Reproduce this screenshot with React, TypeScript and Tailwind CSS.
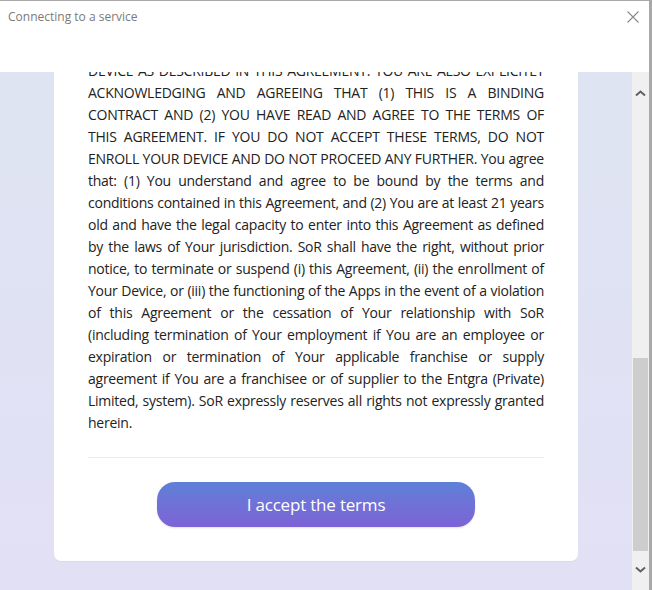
import React from 'react';

const termsLines: string[] = [
  'DEVICE AS DESCRIBED IN THIS AGREEMENT. YOU ARE ALSO EXPLICITLY',
  'ACKNOWLEDGING AND AGREEING THAT (1) THIS IS A BINDING',
  'CONTRACT AND (2) YOU HAVE READ AND AGREE TO THE TERMS OF',
  'THIS AGREEMENT. IF YOU DO NOT ACCEPT THESE TERMS, DO NOT',
  'ENROLL YOUR DEVICE AND DO NOT PROCEED ANY FURTHER. You agree',
  'that: (1) You understand and agree to be bound by the terms and',
  'conditions contained in this Agreement, and (2) You are at least 21 years',
  'old and have the legal capacity to enter into this Agreement as defined',
  'by the laws of Your jurisdiction. SoR shall have the right, without prior',
  'notice, to terminate or suspend (i) this Agreement, (ii) the enrollment of',
  'Your Device, or (iii) the functioning of the Apps in the event of a violation',
  'of this Agreement or the cessation of Your relationship with SoR',
  '(including termination of Your employment if You are an employee or',
  'expiration or termination of Your applicable franchise or supply',
  'agreement if You are a franchisee or of supplier to the Entgra (Private)',
  'Limited, system). SoR expressly reserves all rights not expressly granted',
  'herein.',
];

const Chevron: React.FC<{ down?: boolean }> = ({ down }) => (
  <svg width="11" height="7" viewBox="0 0 11 7" className="block">
    <path
      d={down ? 'M1 1.5 L5.5 5.5 L10 1.5' : 'M1 5.5 L5.5 1.5 L10 5.5'}
      fill="none"
      stroke="#606060"
      strokeWidth="2"
    />
  </svg>
);

const App: React.FC = () => {
  return (
    <div
      className="w-[652px] h-[590px] flex flex-col overflow-hidden border-t border-[#a8a8a8] border-r-[3px] border-r-[#a9a9a9] bg-white"
      style={{ fontFamily: '"Open Sans", "Noto Sans", sans-serif' }}
    >
      {/* title bar */}
      <div className="h-[71px] shrink-0 bg-white flex items-start justify-between">
        <span className="pl-[8px] pt-[8px] text-[12px] leading-[16px] text-[#7a7a7a]">
          Connecting to a service
        </span>
        <svg width="12" height="12" viewBox="0 0 12 12" className="mt-[10px] mr-[10px]">
          <path d="M0.5 0.5 L11.5 11.5 M11.5 0.5 L0.5 11.5" stroke="#8a8a8a" strokeWidth="1.1" />
        </svg>
      </div>

      <div className="flex flex-1 min-h-0">
        {/* scroll viewport */}
        <div className="flex-1 overflow-hidden flex flex-col justify-end items-center pb-[29px] bg-gradient-to-b from-[#dee4f2] to-[#e2e0f5]">
          <div className="w-[524px] shrink-0 bg-white rounded-[7px] px-[34px] pt-[34px] pb-[34px] shadow-[0_1px_1px_rgba(0,0,0,0.04)]">
            <div className="text-[14px] leading-[22px] text-[#222222] tracking-[-0.25px]">
              {termsLines.map((line, i) => (
                <div
                  key={i}
                  className={
                    i < termsLines.length - 1
                      ? 'whitespace-nowrap text-justify [text-align-last:justify]'
                      : 'whitespace-nowrap'
                  }
                >
                  {line}
                </div>
              ))}
            </div>
            <div className="mt-[23px] h-px bg-[#ececec]" />
            <div className="flex justify-center mt-[24px]">
              <button className="w-[318px] h-[45px] rounded-[18px] bg-gradient-to-b from-[#5d80d8] to-[#7d62d6] text-white text-[17px] tracking-[-0.2px] pt-[1px] shadow-[0_1px_2px_rgba(0,0,0,0.12)]">
                I accept the terms
              </button>
            </div>
          </div>
        </div>

        {/* scrollbar */}
        <div className="w-[17px] shrink-0 bg-[#f0f0f0] flex flex-col items-center">
          <div className="h-[42px] flex items-center justify-center pt-[1px]">
            <Chevron />
          </div>
          <div className="flex-1" />
          <div className="w-[15px] h-[193px] bg-[#cdcdcd]" />
          <div className="h-[39px] flex items-center justify-center pb-[3px]">
            <Chevron down />
          </div>
        </div>
      </div>
    </div>
  );
};

export default App;
